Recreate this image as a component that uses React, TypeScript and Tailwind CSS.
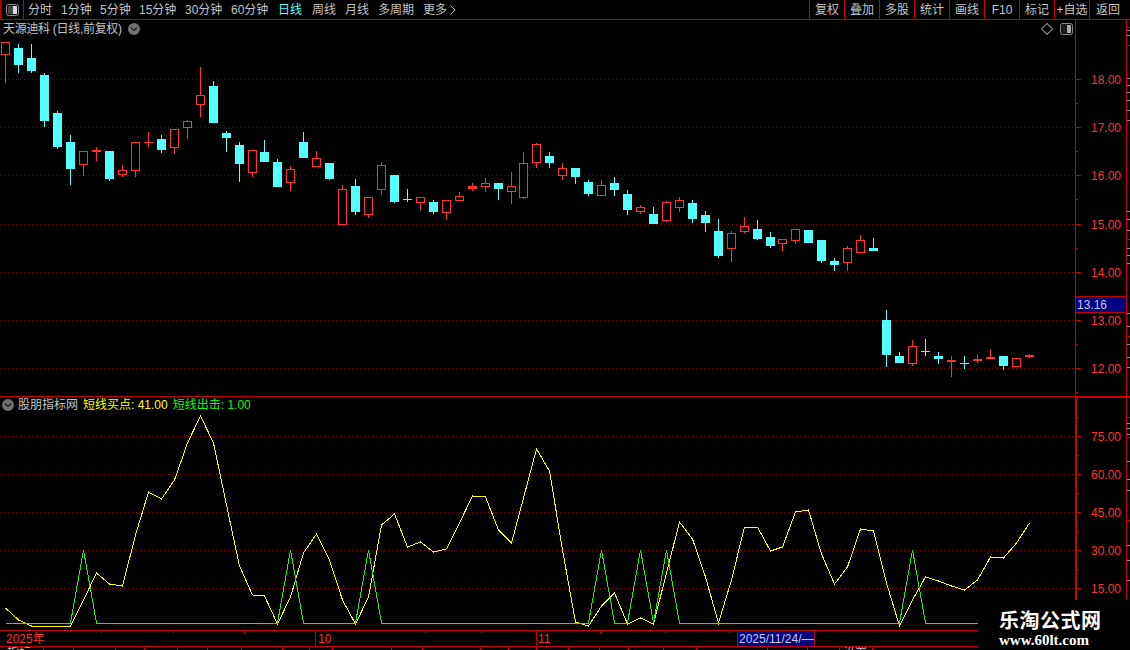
const RED = "#c40000";
const CANDLE_RED = "#ff3232";
const CYAN = "#54ffff";

type C = [number, number, number, number, "r" | "c"];
// hi, lo, top, bottom, colour
const candles: C[] = [
  [42, 83, 42, 55, "r"], [44, 73, 48, 65, "c"], [44, 73, 58, 71, "c"], [73, 127, 75, 121, "c"],
  [111, 149, 113, 147, "c"], [135, 185, 142, 169, "c"], [151, 176, 151, 165, "r"], [147, 161, 150, 152, "r"],
  [151, 181, 151, 179, "c"], [165, 177, 170, 175, "r"], [142, 177, 142, 171, "r"], [132, 147, 142, 143, "r"],
  [135, 153, 139, 150, "c"], [129, 154, 129, 148, "r"], [120, 139, 121, 128, "r"], [67, 117, 95, 105, "r"],
  [81, 123, 86, 123, "c"], [131, 152, 133, 138, "c"], [142, 182, 145, 164, "c"], [150, 177, 150, 173, "r"],
  [140, 162, 152, 162, "c"], [159, 187, 162, 187, "c"], [166, 191, 169, 183, "r"], [132, 158, 142, 158, "c"],
  [151, 167, 158, 167, "r"], [163, 180, 163, 179, "c"], [185, 225, 189, 225, "r"], [179, 215, 186, 212, "c"],
  [197, 218, 197, 215, "r"], [162, 195, 165, 190, "r"], [175, 203, 175, 202, "c"], [189, 202, 199, 200, "c"],
  [197, 210, 197, 203, "r"], [200, 214, 202, 212, "c"], [200, 220, 200, 213, "r"], [192, 201, 196, 201, "r"],
  [183, 191, 186, 189, "r"], [178, 192, 183, 187, "r"], [183, 200, 183, 189, "c"], [172, 204, 186, 192, "r"],
  [152, 199, 163, 198, "r"], [143, 168, 144, 163, "r"], [152, 168, 156, 163, "c"], [163, 180, 168, 176, "r"],
  [168, 184, 168, 177, "c"], [180, 196, 182, 194, "c"], [180, 196, 185, 196, "r"], [177, 196, 183, 190, "c"],
  [190, 215, 194, 210, "c"], [205, 214, 207, 212, "r"], [207, 224, 214, 224, "c"], [201, 222, 202, 221, "r"],
  [197, 212, 200, 208, "r"], [200, 223, 203, 219, "c"], [211, 232, 215, 223, "c"], [219, 258, 231, 256, "c"],
  [231, 262, 233, 249, "r"], [217, 233, 226, 232, "r"], [220, 240, 229, 239, "c"], [232, 248, 237, 246, "c"],
  [239, 251, 239, 244, "r"], [229, 244, 229, 241, "r"], [230, 243, 230, 243, "c"], [240, 263, 240, 261, "c"],
  [258, 271, 261, 265, "c"], [246, 271, 248, 263, "r"], [235, 253, 240, 253, "r"], [238, 251, 248, 251, "c"],
  [310, 367, 320, 355, "c"], [352, 363, 356, 363, "c"], [340, 366, 346, 364, "r"], [339, 356, 351, 352, "c"],
  [352, 364, 356, 359, "c"], [356, 377, 360, 362, "r"], [356, 369, 363, 364, "c"], [355, 363, 359, 361, "r"],
  [349, 359, 357, 359, "r"], [356, 370, 356, 366, "c"], [358, 367, 358, 367, "r"], [354, 358, 355, 357, "r"],
];

const cx = (i: number) => Math.ceil(5 + 12.95 * i);

const yellow = [
  608, 620, 626, 626, 626, 626, 600, 573, 584, 586, 535, 492, 499, 480, 443, 416, 443, 505, 566, 595,
  596, 624, 597, 553, 534, 560, 600, 624, 597, 525, 514, 547, 542, 552, 549, 523, 496, 497, 530, 543,
  498, 449, 471, 550, 622, 626, 606, 593, 624, 618, 624, 573, 522, 539, 577, 623, 580, 527, 527, 551,
  547, 512, 510, 554, 584, 567, 529, 531, 583, 626, 600, 577, 581, 586, 590, 580, 557, 558, 543, 523,
];
const peaks = [6, 22, 28, 46, 49, 51, 70];
const greenPts: string[] = [];
for (let i = 0; i <= 75; i++) greenPts.push(`${cx(i) + 0.5},${peaks.includes(i) ? 550 : 623}`);
greenPts.push("978,623");

const upperGrid = [79, 127, 175, 224, 272, 320, 368];
const upperLabels = ["18.00", "17.00", "16.00", "15.00", "14.00", "13.00", "12.00"];
const lowerGrid = [436, 474, 512, 550, 588];
const lowerLabels = ["75.00", "60.00", "45.00", "30.00", "15.00"];

const leftItems = [
  { t: "分时", w: "w-[24px]", c: "text-[#c4c4c4]", m: "" },
  { t: "1分钟", w: "w-[30px]", c: "text-[#c4c4c4]", m: "" },
  { t: "5分钟", w: "w-[30px]", c: "text-[#c4c4c4]", m: "" },
  { t: "15分钟", w: "w-[37px]", c: "text-[#c4c4c4]", m: "" },
  { t: "30分钟", w: "w-[37px]", c: "text-[#c4c4c4]", m: "" },
  { t: "60分钟", w: "w-[37px]", c: "text-[#c4c4c4]", m: "" },
  { t: "日线", w: "w-[24px]", c: "text-[#54ffff]", m: "ml-[1px]" },
  { t: "周线", w: "w-[24px]", c: "text-[#c4c4c4]", m: "ml-[1px]" },
  { t: "月线", w: "w-[24px]", c: "text-[#c4c4c4]", m: "" },
  { t: "多周期", w: "w-[36px]", c: "text-[#c4c4c4]", m: "" },
];
const rightItems = ["复权", "叠加", "多股", "统计", "画线", "F10", "标记", "+自选"];

const strip1 = [30, 35, 78, 85, 92, 100, 110, 120, 211, 219, 230, 248, 255, 263, 313, 326, 344, 357, 367];
const strip1Red = [27, 45, 239, 336];
const strip2 = [423, 428, 434, 461, 479, 490, 520, 545, 560, 580];
const strip2Red = [417, 437, 520];

function Chevron() {
  return (
    <svg width="12" height="12" viewBox="0 0 12 12" className="shrink-0">
      <circle cx="6" cy="6" r="6" fill="#707070" />
      <path d="M3 4.5 L6 7.5 L9 4.5" fill="none" stroke="#1c1c1c" strokeWidth="1.2" />
    </svg>
  );
}

function PanelIcon({ side }: { side: "l" | "r" }) {
  return (
    <svg width="13" height="12" viewBox="0 0 13 12">
      <rect x="0.5" y="0.5" width="12" height="11" rx="2" fill="#111" stroke="#8a8a8a" />
      <rect x="7" y="2" width="4" height="8" fill={side === "l" ? "#d8d8d8" : "#a8a8a8"} />
      <rect x="2" y="2" width="5" height="8" fill={side === "l" ? "#444" : "#1a1a1a"} />
    </svg>
  );
}

export default function App() {
  return (
    <div className="w-[1130px] h-[650px] bg-black flex flex-col overflow-hidden relative text-[12px] leading-none font-['Liberation_Sans','Noto_Sans_CJK_SC',sans-serif] text-[#c4c4c4]">
      {/* top toolbar */}
      <div className="h-[20px] shrink-0 flex items-stretch border-b border-[#c40000]">
        <div className="w-[24px] shrink-0 flex items-center justify-center border-l border-r border-[#c40000]">
          <PanelIcon side="l" />
        </div>
        <div className="flex items-center gap-[9px] pl-[4px] pt-[1px] flex-1">
          {leftItems.map((it) => (
            <span key={it.t} className={`${it.w} ${it.c} ${it.m} whitespace-nowrap`}>{it.t}</span>
          ))}
          <span className="flex items-center gap-[3px] whitespace-nowrap">
            更多
            <svg width="6" height="10" viewBox="0 0 6 10"><path d="M0.5 0.5 L5 5 L0.5 9.5" fill="none" stroke="#c4c4c4" /></svg>
          </span>
        </div>
        <div className="flex items-stretch">
          {rightItems.map((t) => (
            <div key={t} className="w-[35px] border-l border-[#c40000] flex items-center justify-center pt-[1px] whitespace-nowrap">{t}</div>
          ))}
          <div className="w-[41px] border-l border-[#c40000] flex items-center justify-start pl-[6px] pt-[1px]">返回</div>
        </div>
      </div>

      {/* upper price panel */}
      <div className="h-[376px] shrink-0 flex relative">
        <svg width="1075" height="376" viewBox="0 20 1075 376" className="shrink-0" shapeRendering="crispEdges">
          {upperGrid.map((y) => (
            <line key={y} x1="0" x2="1075" y1={y + 0.5} y2={y + 0.5} stroke="#800000" strokeDasharray="1 3" shapeRendering="geometricPrecision" />
          ))}
          {candles.map(([hi, lo, top, bot, col], i) => {
            const x = cx(i);
            const color = col === "r" ? CANDLE_RED : CYAN;
            const thin = bot - top <= 3;
            return (
              <g key={i}>
                <rect x={x} y={hi} width="1" height={lo - hi} fill={color} />
                {col === "c" || thin ? (
                  <rect x={x - 4} y={top} width="9" height={bot - top} fill={color} />
                ) : (
                  <rect x={x - 3.5} y={top + 0.5} width="8" height={bot - top - 1} fill="#000" stroke={color} />
                )}
              </g>
            );
          })}
        </svg>
        <div className="absolute left-[3px] top-[3px] flex items-center gap-[6px]">
          <span className="whitespace-nowrap tracking-[-0.3px]">天源迪科 (日线,前复权)</span>
          <Chevron />
        </div>
        <div className="absolute left-[1041px] top-[3px] flex items-center gap-[7px]">
          <svg width="12" height="12" viewBox="0 0 12 12" shapeRendering="crispEdges">
            <path d="M6 0.5 L11.5 6 L6 11.5 L0.5 6 Z" fill="none" stroke="#6a6a6a" />
          </svg>
          <PanelIcon side="r" />
        </div>
        <div className="w-[51px] shrink-0 border-l border-[#c40000]">
          <svg width="50" height="376" viewBox="1076 20 50 376">
            {upperGrid.map((y, i) => (
              <g key={y}>
                <rect x="1076" y={y} width="5" height="1" fill={RED} />
                <rect x="1076" y={y + 24} width="2" height="1" fill={RED} />
                <text x="1091" y={y + 5} fontSize="12" fill={CANDLE_RED}>{upperLabels[i]}</text>
              </g>
            ))}
            <rect x="1076" y="297" width="50" height="15" fill="#000080" />
            <rect x="1076" y="296" width="50" height="1" fill={RED} />
            <rect x="1076" y="312" width="50" height="1" fill={RED} />
            <text x="1077" y="309" fontSize="12" fill="#c8c8e8">13.16</text>
          </svg>
        </div>
        <div className="w-[4px] shrink-0 border-l border-[#c40000]">
          <svg width="3" height="376" viewBox="1127 20 3 376" shapeRendering="crispEdges">
            {strip1.map((y) => <rect key={y} x="1127" y={y} width="3" height="1" fill="#8a8a8a" />)}
            {strip1Red.map((y) => <rect key={y} x="1127" y={y} width="3" height="1" fill={RED} />)}
          </svg>
        </div>
      </div>

      {/* lower indicator panel */}
      <div className="h-[234px] shrink-0 flex relative border-t border-[#c40000]">
        <svg width="1075" height="233" viewBox="0 397 1075 233" className="shrink-0" shapeRendering="crispEdges">
          {lowerGrid.map((y) => (
            <line key={y} x1="0" x2="1075" y1={y + 0.5} y2={y + 0.5} stroke="#800000" strokeDasharray="1 3" shapeRendering="geometricPrecision" />
          ))}
          <polyline
            points={yellow.map((y, i) => `${cx(i) + 0.5},${y}`).join(" ")}
            fill="none"
            stroke="#ffff00"
          />
          <polyline points={greenPts.join(" ")} fill="none" stroke="#1cf01c" />
        </svg>
        <div className="absolute left-[2px] top-[2px] flex items-center">
          <Chevron />
          <span className="ml-[4px] mr-[5px] whitespace-nowrap">股朋指标网</span>
          <span className="mr-[5px] text-[#ffff00] whitespace-nowrap">短线买点: 41.00</span>
          <span className="text-[#1cf01c] whitespace-nowrap">短线出击: 1.00</span>
        </div>
        <div className="w-[51px] shrink-0 border-l-2 border-t border-[#c40000]">
          <svg width="49" height="232" viewBox="1077 398 49 232">
            {lowerGrid.map((y, i) => (
              <g key={y}>
                <rect x="1077" y={y} width="4" height="1" fill={RED} />
                <rect x="1077" y={y - 19} width="2" height="1" fill={RED} />
                <text x="1091" y={y + 5} fontSize="12" fill={CANDLE_RED}>{lowerLabels[i]}</text>
              </g>
            ))}
          </svg>
        </div>
        <div className="w-[4px] shrink-0 border-l border-t border-[#c40000]">
          <svg width="3" height="232" viewBox="1127 398 3 232" shapeRendering="crispEdges">
            {strip2.map((y) => <rect key={y} x="1127" y={y} width="3" height="1" fill="#8a8a8a" />)}
            {strip2Red.map((y) => <rect key={y} x="1127" y={y} width="3" height="1" fill={RED} />)}
          </svg>
        </div>
      </div>

      {/* date bar */}
      <div className="h-[16px] shrink-0 flex items-stretch relative border-t border-[#c40000] text-[#ff3232]">
        <div className="w-[315px] shrink-0 pl-[6px] flex items-center">2025年</div>
        <div className="w-[221px] shrink-0 pl-[2px] flex items-center border-l border-[#c40000]">10</div>
        <div className="w-[201px] shrink-0 pl-[1px] flex items-center border-l border-[#c40000]">11</div>
        <div className="w-[78px] shrink-0 pl-[1px] flex items-center bg-[#000080] border-l border-r border-[#c40000] text-[#c8c8e8] whitespace-nowrap">2025/11/24/—</div>
        <svg width="1130" height="3" className="absolute left-0 top-0" shapeRendering="crispEdges">
          {[101, 173, 244, 425, 481, 600, 665, 729].map((x) => (
            <rect key={x} x={x} y="0" width="1" height="2" fill={RED} />
          ))}
        </svg>
      </div>

      {/* bottom tab strip, mostly out of the window */}
      <div className="h-[4px] shrink-0 relative overflow-hidden border-t border-[#c40000] flex text-[#c4c4c4]">
        <span className="ml-[7px] w-[36px]">指标</span>
        <span className="ml-[800px]">设置</span>
        <svg width="1130" height="4" className="absolute left-0 top-0" shapeRendering="crispEdges">
          {[43, 73, 115, 144, 177, 207, 241, 282, 309, 332, 391, 422, 480, 508, 536, 568, 599, 628, 663, 696, 767, 807, 839, 872].map((x) => (
            <rect key={x} x={x} y="0" width="1" height="4" fill={RED} />
          ))}
        </svg>
      </div>

      {/* watermark */}
      <div className="absolute left-[978px] top-[600px] w-[152px] h-[50px] bg-black flex flex-col items-start pl-[21px] pt-[9px]">
        <span className="text-[20px] font-bold text-white tracking-[0.5px] leading-[22px] font-['Noto_Sans_CJK_SC',sans-serif] whitespace-nowrap">乐淘公式网</span>
        <span className="mt-[2px] text-[15px] font-bold text-white leading-[15px] font-['Liberation_Serif',serif] whitespace-nowrap">www.60lt.com</span>
      </div>
    </div>
  );
}
